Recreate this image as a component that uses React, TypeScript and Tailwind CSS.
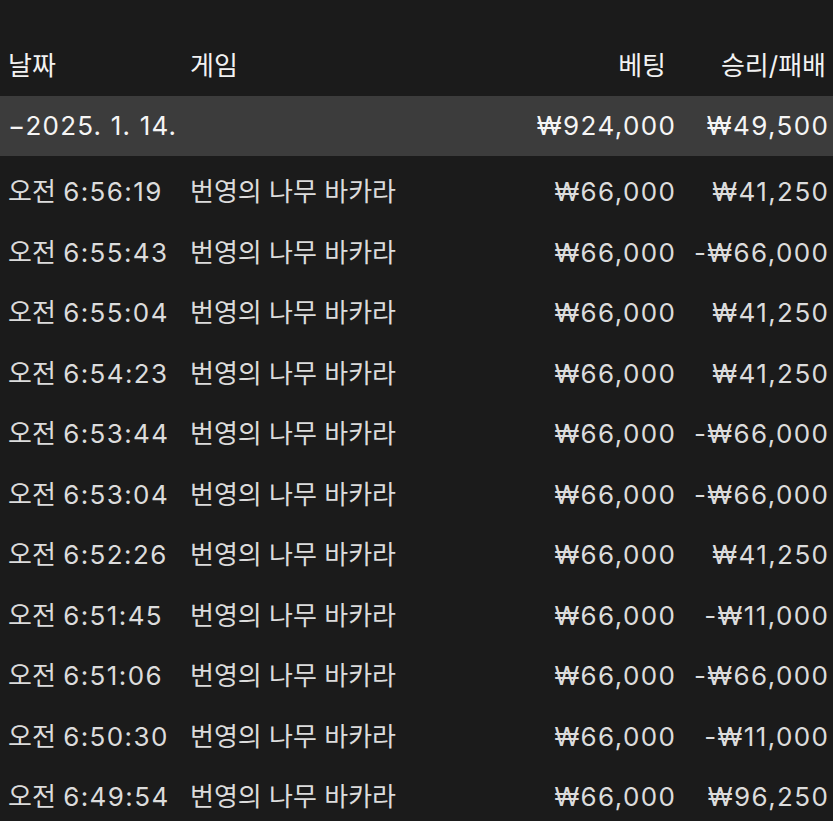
import React from "react";

const rows: [string, string][] = [
  ["6:56:19", "₩41,250"],
  ["6:55:43", "-₩66,000"],
  ["6:55:04", "₩41,250"],
  ["6:54:23", "₩41,250"],
  ["6:53:44", "-₩66,000"],
  ["6:53:04", "-₩66,000"],
  ["6:52:26", "₩41,250"],
  ["6:51:45", "-₩11,000"],
  ["6:51:06", "-₩66,000"],
  ["6:50:30", "-₩11,000"],
  ["6:49:54", "₩96,250"],
];

const font = { fontFamily: 'Inter, "Noto Sans CJK KR", "Noto Sans", sans-serif' };

export default function App() {
  return (
    <div
      className="w-[833px] h-[821px] bg-[#1b1b1b] overflow-hidden pt-[36px] text-[26px] leading-none"
      style={font}
    >
      <div className="grid grid-cols-[182px_1fr_auto_153px] items-center h-[60px] pl-[8px] pr-[5px] text-[#f2f2f2]">
        <div>날짜</div>
        <div>게임</div>
        <div className="text-right pr-[9px]">베팅</div>
        <div className="text-right pr-[2px]">승리/패배</div>
      </div>
      <div className="grid grid-cols-[182px_1fr_auto_153px] items-center h-[60px] pl-[8px] pr-[5px] bg-[#3c3c3c] text-[#f5f5f5]">
        <div className="col-span-2 tracking-[1.2px]">−2025. 1. 14.</div>
        <div className="text-right tracking-[1.4px] mr-[-1.4px]">₩924,000</div>
        <div className="text-right tracking-[1.4px] mr-[-1.4px]">₩49,500</div>
      </div>
      <div className="mt-[6px]">
        {rows.map(([t, w], i) => (
          <div
            key={i}
            className="grid grid-cols-[182px_1fr_auto_153px] items-center h-[60.5px] pl-[8px] pr-[5px] text-[#dcdcdc]"
          >
            <div>
              오전 <span className="tracking-[1.4px]">{t}</span>
            </div>
            <div>번영의 나무 바카라</div>
            <div className="text-right tracking-[1.4px] mr-[-1.4px]">₩66,000</div>
            <div className="text-right tracking-[1.4px] mr-[-1.4px]">{w}</div>
          </div>
        ))}
      </div>
    </div>
  );
}
